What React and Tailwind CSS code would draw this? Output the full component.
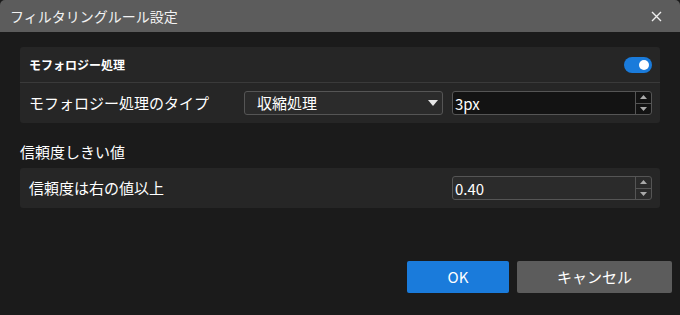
import React, { useState } from "react";

const font = { fontFamily: '"Noto Sans CJK JP", "Noto Sans", sans-serif' };

const Spinner = () => (
  <div className="flex flex-col w-[16px] border-l border-[#555]">
    <div className="flex-1 flex items-center justify-center border-b border-[#555]">
      <svg width="7" height="4" viewBox="0 0 7 4"><path d="M0 4 L3.5 0 L7 4 Z" fill="#aaa" /></svg>
    </div>
    <div className="flex-1 flex items-center justify-center">
      <svg width="7" height="4" viewBox="0 0 7 4"><path d="M0 0 L3.5 4 L7 0 Z" fill="#aaa" /></svg>
    </div>
  </div>
);

const NumberInput = ({ value, dark }) => (
  <div
    className={`flex w-[200px] h-[24px] border border-[#555] rounded-[3px] ${
      dark ? "bg-[#131313]" : "bg-[#2b2b2b]"
    }`}
  >
    <div className="flex-1 flex items-center pl-[2px] text-[15px] text-white leading-none">{value}</div>
    <Spinner />
  </div>
);

export default function App() {
  const [on, setOn] = useState(true);

  return (
    <div className="w-[680px] h-[315px] bg-[#1b1b1b] flex flex-col text-white" style={font}>
      {/* Title bar */}
      <div className="h-[32px] bg-[#5c5c5c] rounded-t-[5px] flex items-center justify-between pl-[10px] pr-[18px]">
        <span className="text-[14px] text-[#f2f2f2]">フィルタリングルール設定</span>
        <svg width="11" height="11" viewBox="0 0 11 11">
          <path d="M1 1 L10 10 M10 1 L1 10" stroke="#eee" strokeWidth="1.4" />
        </svg>
      </div>

      <div className="px-[20px] pt-[15px] flex flex-col">
        {/* Morphology panel */}
        <div className="bg-[#262626] rounded-[3px] flex flex-col">
          <div className="h-[36px] flex items-center justify-between pl-[9px] pr-[8px] border-b border-[#3a3a3a]">
            <span className="text-[12px] font-bold">モフォロジー処理</span>
            <button
              onClick={() => setOn(!on)}
              className="w-[28px] h-[16px] rounded-full bg-[#1a7bdb] flex items-center justify-end pr-[3px]"
            >
              <span className="w-[10px] h-[10px] rounded-full bg-white" />
            </button>
          </div>
          <div className="h-[40px] flex items-center pl-[9px] pr-[8px]">
            <span className="text-[15px] w-[215px]">モフォロジー処理のタイプ</span>
            <div className="w-[199px] h-[24px] bg-[#2b2b2b] border border-[#555] rounded-[3px] flex items-center justify-between pl-[12px] pr-[4px]">
              <span className="text-[15px]">収縮処理</span>
              <svg width="10" height="6" viewBox="0 0 10 6"><path d="M0 0 L5 6 L10 0 Z" fill="#e6e6e6" /></svg>
            </div>
            <div className="ml-[9px]">
              <NumberInput value="3px" dark />
            </div>
          </div>
        </div>

        {/* Confidence */}
        <div className="mt-[18px] h-[22px] flex items-center text-[15px]">信頼度しきい値</div>
        <div className="mt-[5px] bg-[#262626] rounded-[3px] h-[40px] flex items-center justify-between pl-[9px] pr-[8px]">
          <span className="text-[15px]">信頼度は右の値以上</span>
          <NumberInput value="0.40" />
        </div>

        {/* Buttons */}
        <div className="mt-[53px] flex justify-end gap-[8px] -mr-[12px]">
          <button className="w-[102px] h-[32px] bg-[#1a7bdb] rounded-[2px] text-[15px]">OK</button>
          <button className="w-[155px] h-[32px] bg-[#5c5c5c] rounded-[2px] text-[15px]">キャンセル</button>
        </div>
      </div>
    </div>
  );
}
